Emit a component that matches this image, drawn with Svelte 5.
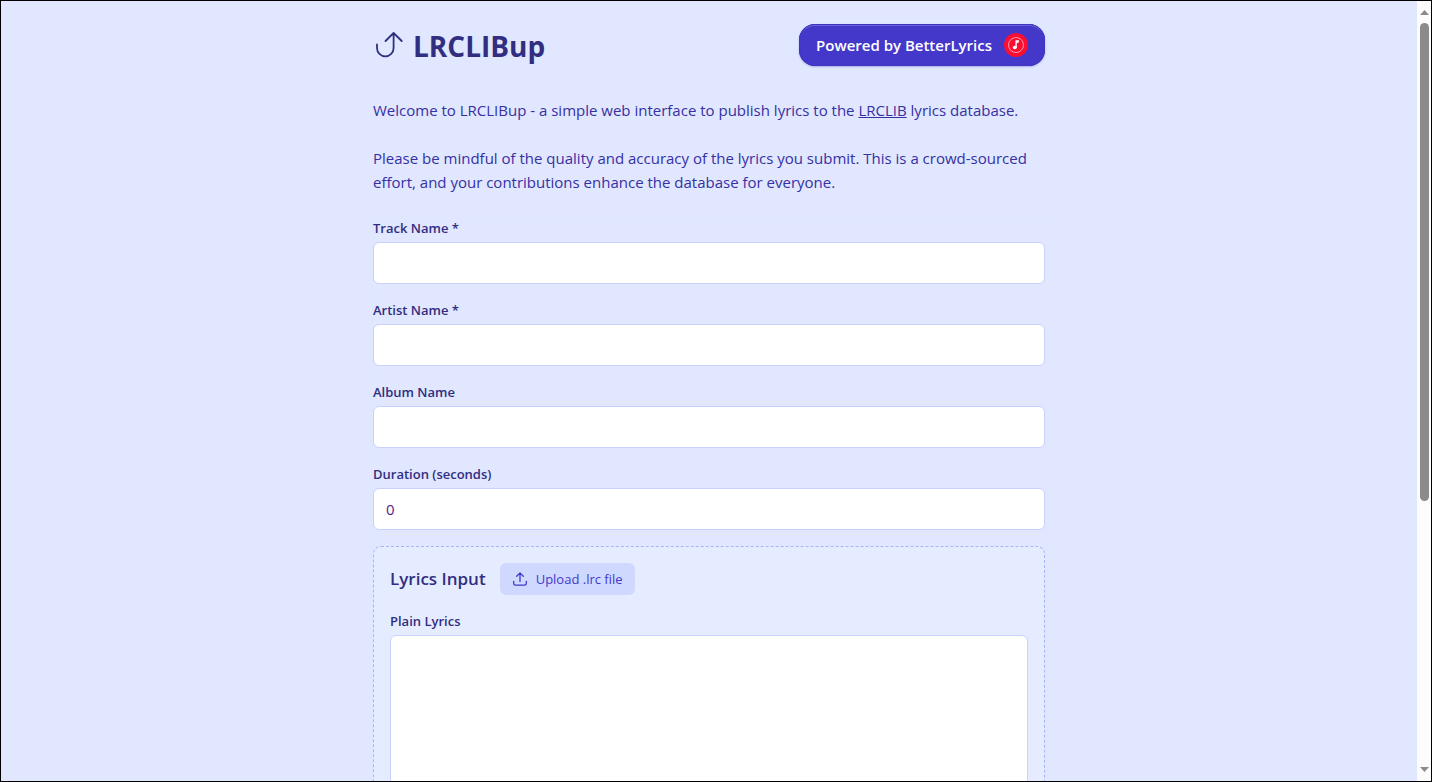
<script>
  let track = $state('');
  let artist = $state('');
  let album = $state('');
  let duration = $state('0');
  let lyrics = $state('');
</script>

<div class="shell">
  <div class="page">
    <main>
      <header>
        <h1>
          <svg width="32" height="32" viewBox="0 0 32 32" fill="none" stroke="currentColor" stroke-width="1.800" stroke-linecap="round" stroke-linejoin="round" aria-hidden="true">
            <path d="M4 14.500v3.500a8.300 8.300 0 0 0 16.600 0V3M12.500 11l8.100-8 8.100 8" />
          </svg>
          LRCLIBup
        </h1>
        <a class="powered" href="#betterlyrics">
          Powered by BetterLyrics
          <svg width="24" height="24" viewBox="0 0 24 24" aria-hidden="true">
            <circle cx="12" cy="12" r="12" fill="#fa0f32" />
            <circle cx="12" cy="12" r="7.5" fill="none" stroke="#ff9aaa" />
            <ellipse cx="10.8" cy="14.5" rx="2" ry="1.8" fill="#fff" />
            <path d="M11.4 14.5V7.6l3.4-.7v2.6l-2 .4v4.6z" fill="#fff" />
          </svg>
        </a>
      </header>

      <p>Welcome to LRCLIBup - a simple web interface to publish lyrics to the <a href="#lrclib">LRCLIB</a> lyrics database.</p>
      <p>Please be mindful of the quality and accuracy of the lyrics you submit. This is a crowd-sourced effort, and your contributions enhance the database for everyone.</p>

      <form>
        <div class="field">
          <label for="track">Track Name *</label>
          <input id="track" type="text" bind:value={track} />
        </div>
        <div class="field">
          <label for="artist">Artist Name *</label>
          <input id="artist" type="text" bind:value={artist} />
        </div>
        <div class="field">
          <label for="album">Album Name</label>
          <input id="album" type="text" bind:value={album} />
        </div>
        <div class="field">
          <label for="duration">Duration (seconds)</label>
          <input id="duration" type="text" inputmode="numeric" bind:value={duration} />
        </div>

        <section>
          <div class="bar">
            <h2>Lyrics Input</h2>
            <button type="button">
              <svg width="16" height="16" viewBox="0 0 16 16" fill="none" stroke="currentColor" stroke-width="1.3" stroke-linecap="round" stroke-linejoin="round" aria-hidden="true">
                <path d="M1.7 10.500v2c0 1 .6 1.700 1.700 1.700h9.200c1.100 0 1.700-.7 1.700-1.700v-2M8 10.500V2M4.700 5.200 8 1.900l3.300 3.300" />
              </svg>
              Upload .lrc file
            </button>
          </div>
          <div class="field">
            <label for="plain">Plain Lyrics</label>
            <textarea id="plain" rows="12" bind:value={lyrics}></textarea>
          </div>
        </section>
      </form>
    </main>
  </div>

  <div class="scrollbar" aria-hidden="true">
    <svg width="9" height="5" viewBox="0 0 9 5"><path d="M0 5 4.500 0 9 5z" /></svg>
    <div class="track"><div class="thumb"></div></div>
    <svg width="9" height="5" viewBox="0 0 9 5"><path d="M0 0h9L4.500 5z" /></svg>
  </div>
</div>

<style>
  .shell {
    box-sizing: border-box;
    display: flex;
    height: 100vh;
    border: 1px solid #000;
    background: #e0e7ff;
    color: #3730a3;
    font-family: "Segoe UI", "Open Sans", sans-serif;
    font-size: 15px;
    line-height: 24px;
  }
  .shell * { box-sizing: border-box; }
  .page {
    flex: 1;
    overflow-y: auto;
    scrollbar-width: none;
    padding: 23px 16px;
  }
  main { max-width: 672px; margin: 0 auto; }
  header {
    display: flex;
    align-items: center;
    justify-content: space-between;
    margin-bottom: 32px;
  }
  h1 {
    display: flex;
    align-items: center;
    gap: 8px;
    margin: 0;
    padding-top: 2px;
    color: #312e81;
    font-size: 28px;
    line-height: 36px;
    font-weight: 700;
  }
  .powered {
    display: flex;
    align-items: center;
    gap: 12px;
    height: 42px;
    padding: 0 17px;
    border-radius: 16px;
    background: #4338ca;
    box-shadow: inset 0 0 0 1px #4033bd, inset 0 2px 0 #6a61d6, 0 1px 2px #aab0e4;
    color: #fff;
    font-size: 15px;
    font-weight: 600;
    text-decoration: none;
  }
  p { margin: 0 0 24px; }
  p a { color: inherit; }
  form {
    display: flex;
    flex-direction: column;
    gap: 16px;
    border-radius: 8px;
    box-shadow: 0 0 1px #d4dbfa;
  }
  .field { display: flex; flex-direction: column; gap: 4px; }
  label {
    color: #312e81;
    font-size: 13px;
    line-height: 20px;
    font-weight: 600;
  }
  input, textarea {
    width: 100%;
    padding: 8px 12px;
    border: 1px solid #c7d2fe;
    border-radius: 6px;
    outline: none;
    background: #fff;
    color: #581c87;
    font: inherit;
  }
  input { height: 42px; }
  textarea { display: block; resize: none; }
  section {
    display: flex;
    flex-direction: column;
    gap: 16px;
    padding: 16px;
    border: 1px dashed #a5b4fc;
    border-radius: 8px;
    background: #e6ecff;
  }
  .bar { display: flex; align-items: center; gap: 14px; }
  h2 {
    margin: 0;
    color: #312e81;
    font-size: 17px;
    line-height: 28px;
    font-weight: 600;
  }
  button {
    display: flex;
    align-items: center;
    gap: 8px;
    height: 32px;
    padding: 0 12px;
    border: 0;
    border-radius: 6px;
    background: #cfd8ff;
    color: #4338ca;
    font: inherit;
    font-size: 13px;
  }
  .scrollbar {
    display: flex;
    flex-direction: column;
    align-items: center;
    gap: 8px;
    width: 14px;
    padding: 9px 0;
    background: #fcfcfc;
  }
  .scrollbar svg { flex: none; fill: #8b8b8b; }
  .track { flex: 1; }
  .thumb {
    width: 9px;
    height: 65%;
    border-radius: 5px;
    background: #8b8b8b;
  }
</style>
